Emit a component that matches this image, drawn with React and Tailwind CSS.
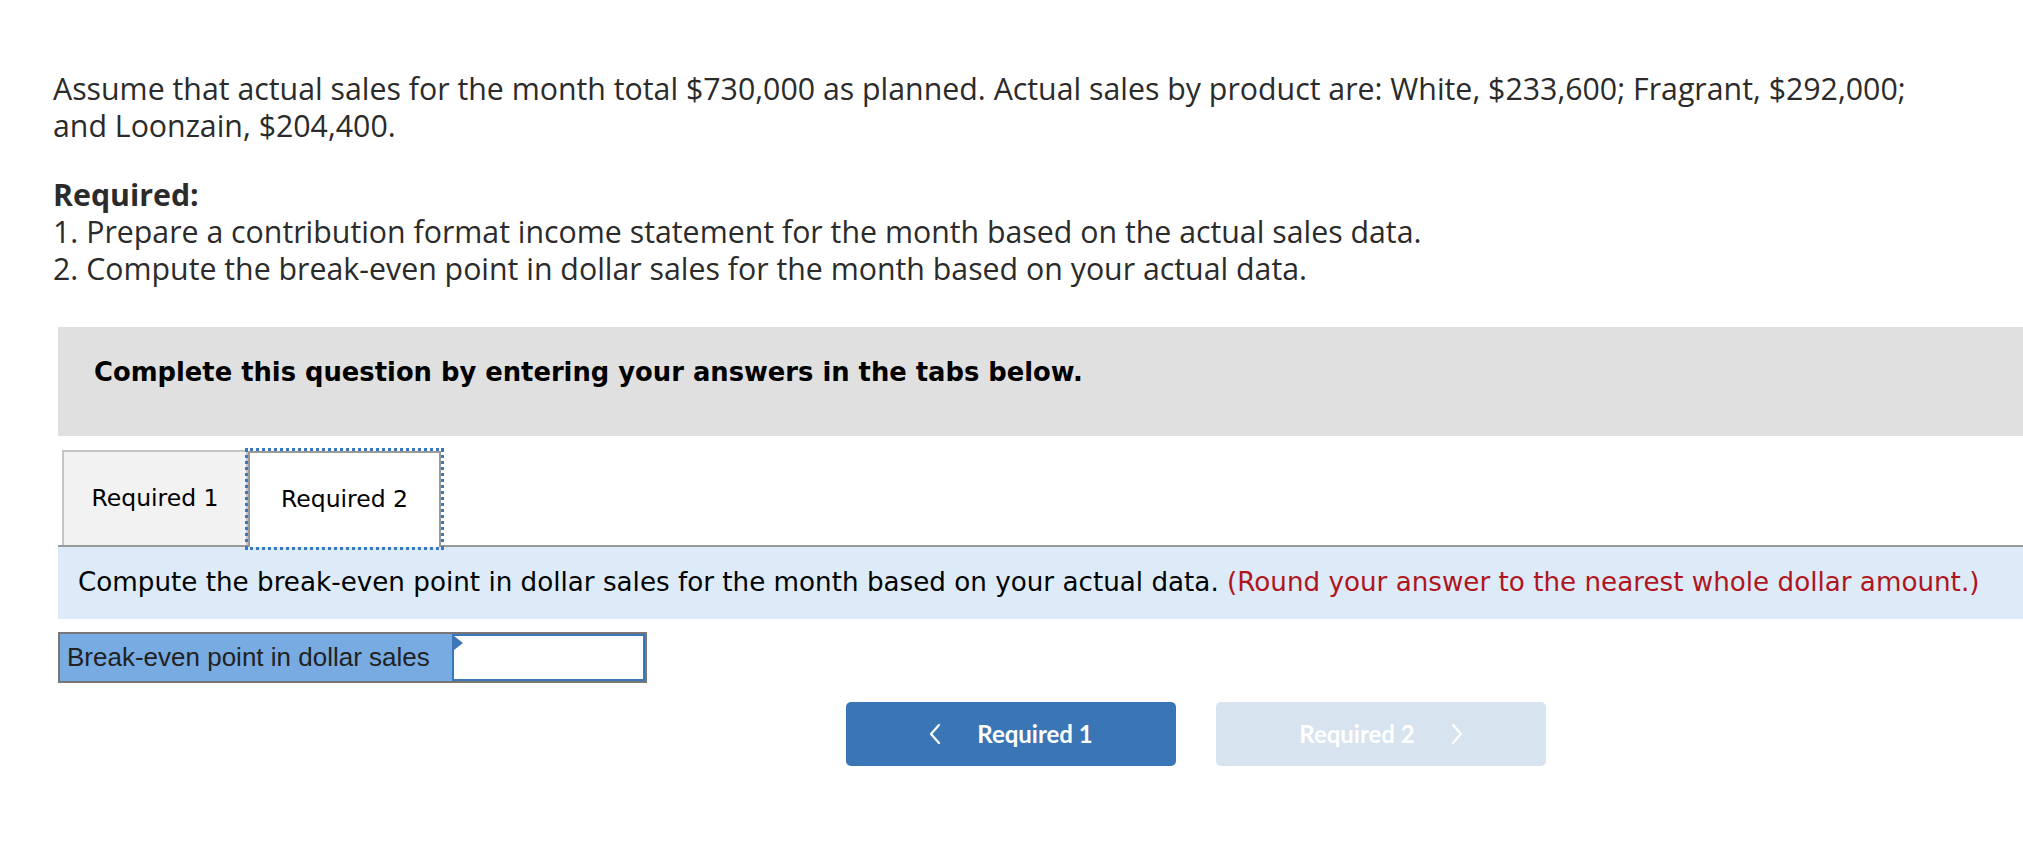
import React from 'react';

const ChevronLeft = () => (
  <svg width="12" height="22" viewBox="0 0 12 22" fill="none" stroke="white" strokeWidth="2.2" strokeLinecap="round" strokeLinejoin="round">
    <path d="M10 2 L2 11 L10 20" />
  </svg>
);

const ChevronRight = () => (
  <svg width="12" height="22" viewBox="0 0 12 22" fill="none" stroke="white" strokeWidth="2.2" strokeLinecap="round" strokeLinejoin="round">
    <path d="M2 2 L10 11 L2 20" />
  </svg>
);

const App = () => {
  return (
    <div className="min-h-[849px] w-[2023px] bg-white pt-[70px] pl-[53px] overflow-hidden">
      {/* Problem text */}
      <div className="font-['Open_Sans',sans-serif] text-[30.3px] leading-[37px] text-[#2b2b2b]">
        <p>
          Assume that actual sales for the month total $730,000 as planned. Actual sales by product are: White, $233,600; Fragrant, $292,000;
          <br />
          and Loonzain, $204,400.
        </p>
        <p className="mt-[32px] font-bold">Required:</p>
        <p>1. Prepare a contribution format income statement for the month based on the actual sales data.</p>
        <p>2. Compute the break-even point in dollar sales for the month based on your actual data.</p>
      </div>

      <div className="ml-[5px] mt-[40px]">
        {/* Instructions bar */}
        <div className="h-[109px] bg-[#e0e0e0] pl-[36px] pt-[30px] font-['DejaVu_Sans',sans-serif] text-[25.8px] font-bold leading-[30px] text-black">
          Complete this question by entering your answers in the tabs below.
        </div>

        {/* Tabs */}
        <div className="mt-[14px] flex items-end border-b-2 border-[#999] pl-[4px] font-['DejaVu_Sans',sans-serif] text-[23.5px] text-black">
          <div className="flex h-[95px] w-[186px] items-center justify-center border-2 border-b-0 border-[#c4c4c4] bg-[#f2f2f2]">
            Required 1
          </div>
          <div className="-mb-[2px] flex h-[96px] w-[193px] items-center justify-center border-2 border-b-0 border-[#999] bg-white outline-[3px] outline-dotted outline-[#3a78c0]">
            Required 2
          </div>
        </div>

        <div className="flex h-[72px] items-center bg-[#dcebf7] pl-[20px] font-['DejaVu_Sans',sans-serif] text-[26.2px] text-black">
          <span>
            Compute the break-even point in dollar sales for the month based on your actual data.{' '}
            <span className="text-[#b0151e]">(Round your answer to the nearest whole dollar amount.)</span>
          </span>
        </div>

        {/* Answer row */}
        <div className="mt-[13px] flex h-[51px] w-[589px] border-2 border-[#777] font-['Liberation_Sans',Arial,sans-serif] text-[26px] text-[#222]">
          <div className="flex w-[392px] items-center bg-[#77abe1] pl-[7px]">
            Break-even point in dollar sales
          </div>
          <div className="relative flex-1 border-2 border-[#3a76b8] bg-white">
            <span className="absolute left-0 top-0 h-0 w-0 border-y-[7px] border-l-[9px] border-y-transparent border-l-[#3a76b8]" />
          </div>
        </div>

        {/* Navigation buttons */}
        <div className="ml-[788px] mt-[19px] flex gap-[40px] font-['Lato',sans-serif] text-[24px] font-bold text-white">
          <button className="flex h-[64px] w-[330px] items-center justify-center gap-[36px] rounded-[5px] bg-[#3a76b6]">
            <ChevronLeft />
            <span>Required 1</span>
          </button>
          <button className="flex h-[64px] w-[330px] items-center justify-center gap-[36px] rounded-[5px] bg-[#d8e3f0]">
            <span>Required 2</span>
            <ChevronRight />
          </button>
        </div>
      </div>
    </div>
  );
};

export default App;
